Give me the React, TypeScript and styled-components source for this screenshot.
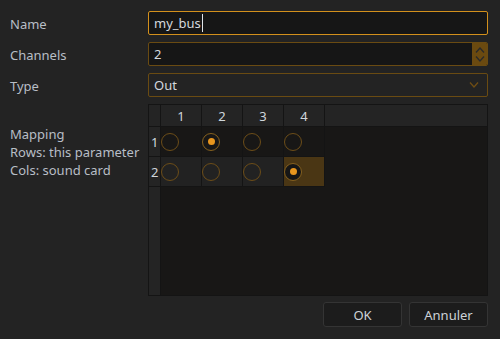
import React from 'react';
import styled, { createGlobalStyle } from 'styled-components';

const GlobalStyle = createGlobalStyle`
  html, body {
    margin: 0;
    padding: 0;
    background: #232323;
  }
  body {
    font-family: "Noto Sans", "Open Sans", sans-serif;
    font-size: 13px;
    color: #b8bec6;
  }
`;

const Dialog = styled.div`
  box-sizing: border-box;
  width: 500px;
  height: 339px;
  padding: 11px 12px 12px 10px;
  display: flex;
  flex-direction: column;
  background: #232323;
`;

const Form = styled.div`
  display: grid;
  grid-template-columns: 138px 340px;
  grid-template-rows: 24px 24px 24px 192px;
  row-gap: 7px;
`;

const Label = styled.div<{ $top?: boolean }>`
  display: flex;
  align-items: ${p => (p.$top ? 'flex-start' : 'center')};
  padding-top: ${p => (p.$top ? '21px' : '1px')};
  line-height: 18px;
  color: #b8bec6;
  white-space: pre-line;
`;

const Field = styled.div<{ $focused?: boolean; $dark?: boolean }>`
  box-sizing: border-box;
  height: 24px;
  display: flex;
  align-items: center;
  border: 1px solid ${p => (p.$focused ? '#d3901c' : '#6a4b12')};
  border-radius: 2px;
  background: ${p => (p.$dark ? '#161616' : '#232323')};
  color: #d4d9de;
  overflow: hidden;
`;

const FieldText = styled.span`
  flex: 1;
  padding-left: 5px;
  display: flex;
  align-items: center;
`;

const Caret = styled.span`
  display: inline-block;
  width: 1px;
  height: 18px;
  margin-left: 1px;
  background: #e0e4e8;
`;

const SpinButton = styled.div`
  width: 15px;
  align-self: stretch;
  background: #6b4a10;
  display: flex;
  align-items: center;
  justify-content: center;
`;

const SpinArrows = styled.div`
  display: flex;
  flex-direction: column;
  gap: 3px;
`;

const DropArrow = styled.div`
  width: 26px;
  display: flex;
  align-items: center;
  justify-content: center;
`;

const TableFrame = styled.div`
  box-sizing: border-box;
  border: 1px solid #141414;
  background: #181716;
  display: grid;
  grid-template-columns: 12px 41px 41px 41px 41px 1fr;
  grid-template-rows: 22px 30px 30px 1fr;
`;

const HeaderCell = styled.div`
  box-sizing: border-box;
  background: #242424;
  border-right: 1px solid #141414;
  border-bottom: 1px solid #141414;
  display: flex;
  align-items: center;
  justify-content: center;
  color: #d0d6dc;
`;

const HeaderFill = styled(HeaderCell)`
  border-right: none;
`;

const RowHeader = styled(HeaderCell)`
  justify-content: flex-start;
  padding-left: 2px;
`;

const RowHeaderFill = styled.div`
  background: #242424;
  border-right: 1px solid #141414;
`;

const Cell = styled.div<{ $alt?: boolean; $selected?: boolean }>`
  box-sizing: border-box;
  border-right: 1px solid #141414;
  border-bottom: 1px solid #141414;
  background: ${p => (p.$selected ? '#4a3614' : p.$alt ? '#222222' : '#181716')};
  display: flex;
  align-items: center;
`;

const EmptyArea = styled.div<{ $span: string }>`
  grid-column: ${p => p.$span};
`;

const Radio = styled.span<{ $checked?: boolean; $selected?: boolean }>`
  box-sizing: border-box;
  width: 18px;
  height: 18px;
  border-radius: 50%;
  border: 1px solid ${p => (p.$checked ? '#85601e' : '#6c4d18')};
  background: ${p => (p.$selected ? '#161616' : 'transparent')};
  display: flex;
  align-items: center;
  justify-content: center;

  &::after {
    content: '';
    display: ${p => (p.$checked ? 'block' : 'none')};
    width: 7px;
    height: 7px;
    border-radius: 50%;
    background: #e8961e;
  }
`;

const Buttons = styled.div`
  margin-top: 6px;
  display: flex;
  justify-content: flex-end;
  gap: 7px;
`;

const Button = styled.button`
  box-sizing: border-box;
  width: 79px;
  height: 25px;
  border: 1px solid #343434;
  border-radius: 3px;
  background: #1c1c1c;
  color: #cdd2d7;
  font-family: "Noto Sans", "Open Sans", sans-serif;
  font-size: 13px;
  padding: 0;
`;

const Chevron = ({ up, color }: { up?: boolean; color: string }) => (
  <svg width="10" height="6" viewBox="0 0 10 6">
    <path
      d={up ? 'M1 5.5 L5 1 L9 5.5' : 'M1 0.5 L5 5 L9 0.5'}
      fill="none"
      stroke={color}
      strokeWidth="1.3"
    />
  </svg>
);

const mapping = [
  [false, true, false, false],
  [false, false, false, true],
];

export default function App() {
  return (
    <>
      <GlobalStyle />
      <Dialog>
        <Form>
          <Label>Name</Label>
          <Field $focused $dark>
            <FieldText>
              my_bus<Caret />
            </FieldText>
          </Field>

          <Label>Channels</Label>
          <Field $dark>
            <FieldText>2</FieldText>
            <SpinButton>
              <SpinArrows>
                <Chevron up color="#2a2a2a" />
                <Chevron color="#2a2a2a" />
              </SpinArrows>
            </SpinButton>
          </Field>

          <Label>Type</Label>
          <Field>
            <FieldText>Out</FieldText>
            <DropArrow>
              <Chevron color="#6e4d14" />
            </DropArrow>
          </Field>

          <Label $top>{'Mapping\nRows: this parameter\nCols: sound card'}</Label>
          <TableFrame>
            <HeaderCell />
            {[1, 2, 3, 4].map(n => (
              <HeaderCell key={n}>{n}</HeaderCell>
            ))}
            <HeaderFill />
            {mapping.map((row, r) => (
              <React.Fragment key={r}>
                <RowHeader>{r + 1}</RowHeader>
                {row.map((on, c) => {
                  const selected = r === 1 && c === 3;
                  return (
                    <Cell key={c} $alt={r === 1} $selected={selected}>
                      <Radio $checked={on} $selected={selected} />
                    </Cell>
                  );
                })}
                <EmptyArea $span="6" />
              </React.Fragment>
            ))}
            <RowHeaderFill />
            <EmptyArea $span="2 / 7" />
          </TableFrame>
        </Form>
        <Buttons>
          <Button>OK</Button>
          <Button>Annuler</Button>
        </Buttons>
      </Dialog>
    </>
  );
}
